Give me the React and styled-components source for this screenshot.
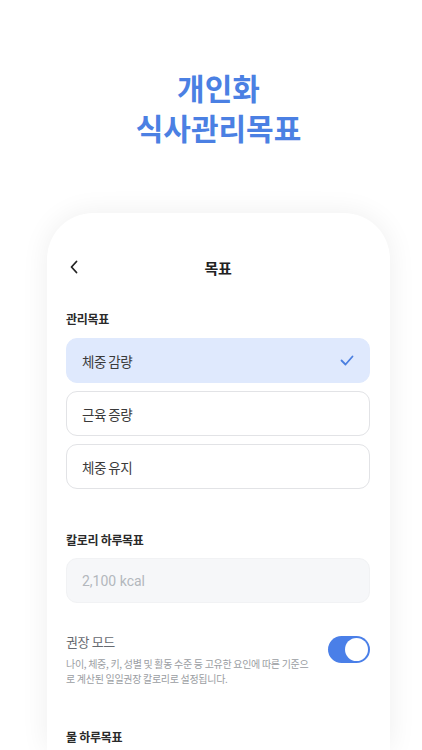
import React from "react";
import styled, { createGlobalStyle } from "styled-components";

const Global = createGlobalStyle`
  html, body { margin: 0; padding: 0; background: #ffffff; }
  body { font-family: "Noto Sans CJK KR", "Noto Sans", sans-serif; overflow: hidden; }
  * { box-sizing: border-box; }
`;

const Page = styled.div`
  width: 422px;
  height: 750px;
  overflow: hidden;
  display: flex;
  flex-direction: column;
  align-items: center;
  padding-top: 67px;
  padding-left: 15px;
`;

const Headline = styled.h1`
  margin: 0;
  font-size: 30px;
  line-height: 40px;
  font-weight: 700;
  color: #4b80e3;
  text-align: center;
  letter-spacing: 0px;
`;

const Phone = styled.div`
  margin-top: 66px;
  width: 343px;
  flex: 1;
  background: #fff;
  border-radius: 46px 46px 0 0;
  box-shadow: 0 0 28px rgba(0, 0, 0, 0.07);
  padding: 32px 20px 0 19px;
  display: flex;
  flex-direction: column;
`;

const Nav = styled.div`
  height: 44px;
  display: grid;
  grid-template-columns: 40px 1fr 40px;
  align-items: center;
`;

const Back = styled.div`
  display: flex;
  align-items: center;
  padding-left: 3px;
`;

const NavTitle = styled.div`
  text-align: center;
  font-size: 15px;
  font-weight: 700;
  color: #222;
  letter-spacing: -0.3px;
`;

const Section = styled.div`
  margin-top: ${(p) => p.$gap}px;
  display: flex;
  flex-direction: column;
`;

const Label = styled.div`
  font-size: 12px;
  line-height: 18px;
  font-weight: 700;
  color: #2a2a2a;
  letter-spacing: -0.3px;
  margin-bottom: ${(p) => p.$mb}px;
`;

const Options = styled.div`
  display: flex;
  flex-direction: column;
  gap: 8px;
`;

const Option = styled.div`
  height: 45px;
  border-radius: 11px;
  display: flex;
  align-items: center;
  justify-content: space-between;
  padding: 0 15px 0 15px;
  background: ${(p) => (p.$selected ? "#dfe9fd" : "#fff")};
  border: 1px solid ${(p) => (p.$selected ? "#dfe9fd" : "#e2e3e6")};
  font-size: 13.5px;
  color: #3a3a3a;
  letter-spacing: -0.5px;
`;

const Input = styled.div`
  height: 45px;
  border-radius: 11px;
  background: #f6f7f9;
  border: 1px solid #f1f2f4;
  display: flex;
  align-items: center;
  padding-left: 15px;
  font-family: Roboto, "Noto Sans", sans-serif;
  font-size: 14px;
  color: #b3b7bd;
`;

const ModeRow = styled.div`
  margin-top: 29px;
  display: flex;
  justify-content: space-between;
  align-items: flex-start;
`;

const ModeText = styled.div`
  display: flex;
  flex-direction: column;
  gap: 4px;
`;

const ModeTitle = styled.div`
  font-size: 13px;
  line-height: 20px;
  color: #666a70;
  letter-spacing: -0.4px;
`;

const ModeDesc = styled.div`
  width: 244px;
  font-size: 10px;
  line-height: 15px;
  color: #9a9da2;
  letter-spacing: -0.3px;
`;

const Toggle = styled.div`
  margin-top: 4px;
  width: 42px;
  height: 27px;
  border-radius: 14px;
  background: #4a7fe8;
  display: flex;
  align-items: center;
  justify-content: flex-end;
  padding-right: 2px;
`;

const Knob = styled.div`
  width: 23px;
  height: 23px;
  border-radius: 50%;
  background: #fff;
`;

export default function App() {
  return (
    <>
      <Global />
      <Page>
        <Headline>
          개인화
          <br />
          식사관리목표
        </Headline>
        <Phone>
          <Nav>
            <Back>
              <svg width="10" height="14" viewBox="0 0 10 14" fill="none">
                <path d="M7.5 1.5L2.5 7l5 5.5" stroke="#222" strokeWidth="1.8" strokeLinecap="round" strokeLinejoin="round" />
              </svg>
            </Back>
            <NavTitle>목표</NavTitle>
            <div />
          </Nav>
          <Section $gap={21}>
            <Label $mb={10}>관리목표</Label>
            <Options>
              <Option $selected>
                <span>체중 감량</span>
                <svg width="14" height="11" viewBox="0 0 14 11" fill="none">
                  <path d="M1.5 5.5l4 4 7-8" stroke="#4a7fe0" strokeWidth="1.8" strokeLinecap="round" strokeLinejoin="round" />
                </svg>
              </Option>
              <Option>
                <span>근육 증량</span>
              </Option>
              <Option>
                <span>체중 유지</span>
              </Option>
            </Options>
          </Section>
          <Section $gap={42}>
            <Label $mb={9}>칼로리 하루목표</Label>
            <Input>2,100 kcal</Input>
          </Section>
          <ModeRow>
            <ModeText>
              <ModeTitle>권장 모드</ModeTitle>
              <ModeDesc>
                나이, 체중, 키, 성별 및 활동 수준 등 고유한 요인에 따른 기준으로 계산된 일일권장 칼로리로 설정됩니다.
              </ModeDesc>
            </ModeText>
            <Toggle>
              <Knob />
            </Toggle>
          </ModeRow>
          <Section $gap={42}>
            <Label $mb={0}>물 하루목표</Label>
          </Section>
        </Phone>
      </Page>
    </>
  );
}
